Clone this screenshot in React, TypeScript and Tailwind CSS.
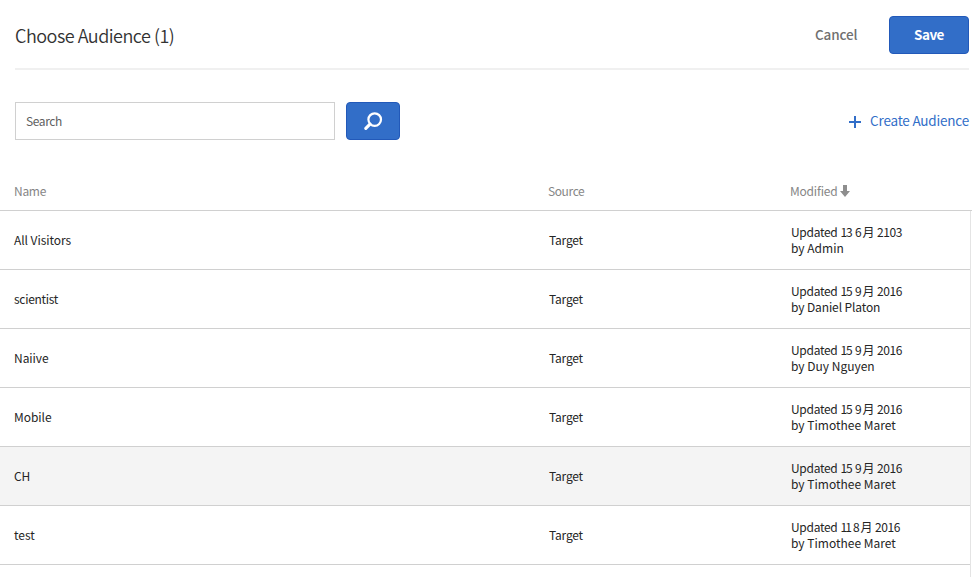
import React from "react";

interface Audience {
  name: string;
  source: string;
  day: string;
  month: string;
  year: string;
  by: string;
  selected?: boolean;
}

const audiences: Audience[] = [
  { name: "All Visitors", source: "Target", day: "13", month: "6", year: "2103", by: "Admin" },
  { name: "scientist", source: "Target", day: "15", month: "9", year: "2016", by: "Daniel Platon" },
  { name: "Naiive", source: "Target", day: "15", month: "9", year: "2016", by: "Duy Nguyen" },
  { name: "Mobile", source: "Target", day: "15", month: "9", year: "2016", by: "Timothee Maret" },
  { name: "CH", source: "Target", day: "15", month: "9", year: "2016", by: "Timothee Maret", selected: true },
  { name: "test", source: "Target", day: "11", month: "8", year: "2016", by: "Timothee Maret" },
];

function SearchIcon() {
  return (
    <svg width="20" height="20" viewBox="0 0 20 20" fill="none" stroke="white">
      <circle cx="11.7" cy="8.6" r="6.3" strokeWidth="2.2" />
      <path d="M7 13.2 L2.8 17.3" strokeWidth="3.2" strokeLinecap="round" />
    </svg>
  );
}

function PlusIcon() {
  return (
    <svg className="mt-[2px]" width="12" height="12" viewBox="0 0 12 12" fill="#326ec8">
      <path d="M5 0h2v5h5v2H7v5H5V7H0V5h5z" />
    </svg>
  );
}

function SortIcon() {
  return (
    <svg width="10" height="12" viewBox="0 0 10 12" fill="#8e8e8e">
      <path d="M3 0h4v6h3L5 12 0 6h3z" />
    </svg>
  );
}

function TopBar() {
  return (
    <header className="ml-[15px] mr-[3px] flex h-[70px] items-start border-b-2 border-[#f0f0f0]">
      <h1 className="mt-[23px] text-[18px] leading-6 font-[350] tracking-[-0.5px] text-[#323232]">
        Choose Audience (1)
      </h1>
      <div className="mt-4 ml-auto flex items-center">
        <button className="mt-[-2px] mr-[31.5px] text-[13.5px] leading-5 font-medium tracking-[-0.1px] text-[#707070]">
          Cancel
        </button>
        <button className="h-[38px] w-[80px] rounded-[4px] border border-[#2259b9] bg-[#326ec8] pb-[2px] text-[13.5px] leading-5 font-bold tracking-[-0.5px] text-white">
          Save
        </button>
      </div>
    </header>
  );
}

function Toolbar() {
  return (
    <div className="mt-8 mr-[3px] ml-[15px] flex h-[38px] items-center">
      <input
        className="h-[38px] w-[320px] border border-[#d0d0d0] px-[10px] pb-[2px] text-[12px] tracking-[-0.4px] text-[#323232] placeholder:text-[#606060]"
        placeholder="Search"
      />
      <button className="ml-[11px] flex h-[38px] w-[54px] items-center justify-center rounded-[4px] border border-[#2259b9] bg-[#326ec8]">
        <SearchIcon />
      </button>
      <button className="ml-auto flex items-center gap-[9px] text-[13.5px] leading-5 tracking-[-0.2px] text-[#326ec8]">
        <PlusIcon />
        <span className="mt-[-2px]">Create Audience</span>
      </button>
    </div>
  );
}

export default function App() {
  return (
    <div className="h-[577px] w-[972px] overflow-hidden bg-white font-['Noto_Sans_CJK_SC',sans-serif]">
      <TopBar />
      <Toolbar />
      <div className="mt-[32px] flex h-[39px] items-center border-b border-[#d0d0d0] text-[12px] leading-4 text-[#868686]">
        <div className="w-[548px] pl-[14px] tracking-[-0.3px]">Name</div>
        <div className="w-[242px] tracking-[-0.4px]">Source</div>
        <div className="flex items-center gap-[3px]">
          <span className="tracking-[-0.2px]">Modified</span>
          <SortIcon />
        </div>
      </div>
      <div className="mr-px h-[366px] border-r border-[#e4e4e4] text-[12px] leading-4 text-[#252525]">
        {audiences.map((a) => (
          <div
            key={a.name}
            className={`flex h-[59px] items-center border-b border-[#d0d0d0] ${a.selected ? "bg-[#f4f4f4]" : "bg-white"}`}
          >
            <div className={`w-[549px] pl-[14px] ${a.name === "scientist" ? "tracking-[-0.3px]" : "tracking-[-0.05px]"}`}>
              {a.name}
            </div>
            <div className="w-[242px] tracking-[-0.2px]">{a.source}</div>
            <div>
              <div className="flex whitespace-pre">
                <span className="w-[49.5px] tracking-[-0.3px]">Updated </span>
                <span className={a.day === "11" ? "w-[12.5px] tracking-[-2px]" : "w-[14.5px] tracking-[-1.2px]"}>
                  {a.day}{" "}
                </span>
                <span className="w-[7.5px]">{a.month}</span>
                <span className="w-[14.5px]">月 </span>
                <span className="tracking-[-0.45px]">{a.year}</span>
              </div>
              <div className={a.by === "Daniel Platon" ? "tracking-[-0.12px]" : ""}>by {a.by}</div>
            </div>
          </div>
        ))}
      </div>
    </div>
  );
}
